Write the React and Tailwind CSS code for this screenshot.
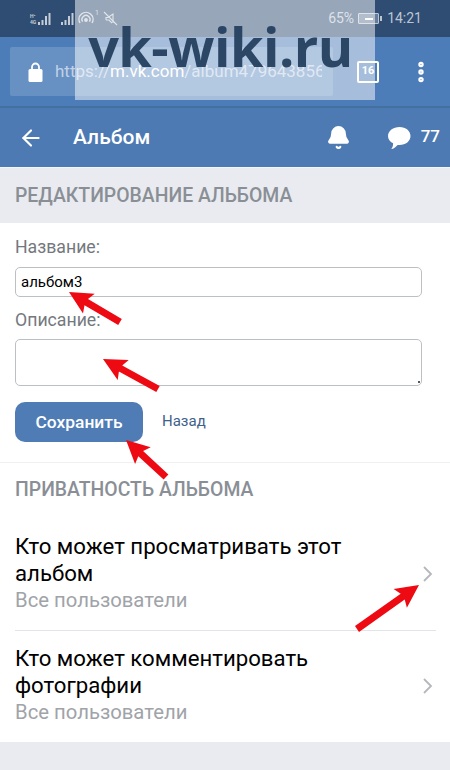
import React from 'react'
import { ArrowLeft, Bell, EllipsisVertical } from 'lucide-react'

const font = { fontFamily: 'Roboto, "Noto Sans", sans-serif' }

const arrows = [
  [120, 322, 69, 292],
  [158, 389, 103, 359],
  [166, 477, 126, 440],
  [357, 629, 419, 585],
]

function arrowPoints([x1, y1, x2, y2]) {
  const len = Math.hypot(x2 - x1, y2 - y1)
  const ux = (x2 - x1) / len
  const uy = (y2 - y1) / len
  const at = (along, side) => `${(x1 + ux * along - uy * side).toFixed(1)},${(y1 + uy * along + ux * side).toFixed(1)}`
  const neck = len - 20
  return [at(0, -3.5), at(neck, -3.5), at(neck - 3, -11.5), at(len, 0), at(neck - 3, 11.5), at(neck, 3.5), at(0, 3.5)].join(' ')
}

function Signal({ className }) {
  return (
    <svg width="14" height="14" viewBox="0 0 14 14" className={className} fill="currentColor">
      <rect x="0" y="10" width="2" height="3" />
      <rect x="3.5" y="8" width="2" height="5" />
      <rect x="7" y="4" width="2" height="9" />
      <rect x="10.5" y="1" width="2" height="12" />
    </svg>
  )
}

function StatusBar() {
  return (
    <div className="h-[37px] bg-[#2f4c72] flex items-center text-[#b4c0cf] shrink-0 pl-[30px] pr-[28px]">
      <div className="flex items-center text-[#c4ccd6]">
        <div className="w-[8px] text-[5px] leading-[6px] font-bold">
          <div>H⁺</div>
          <div>4G</div>
        </div>
        <Signal />
        <Signal className="ml-[9px]" />
        <svg width="16" height="16" viewBox="0 0 16 16" className="ml-[3px]" fill="none" stroke="currentColor" strokeWidth="1.4">
          <path d="M2 12a7 7 0 1 1 12 0" />
          <path d="M4.6 10.6a4 4 0 1 1 6.8 0" />
          <circle cx="8" cy="9" r="1.2" fill="currentColor" />
        </svg>
        <span className="text-[7px] ml-[1px] -mt-[10px]">1</span>
        <svg width="15" height="15" viewBox="0 0 15 15" className="ml-[4px]" fill="none" stroke="currentColor" strokeWidth="1.1">
          <path d="M1 1l13 13" />
          <path d="M3 9V6.5h2L10 3v9" />
          <path d="M3 9h3l3 3" />
        </svg>
      </div>
      <div className="ml-auto flex items-center text-[14px] text-[#bcc6d2]">
        <span>65%</span>
        <div className="ml-[4px] w-[21px] h-[11px] border border-[#bcc6d2] bg-[#bcc6d2]/40 rounded-[1px] flex items-center justify-center">
          <div className="w-[8px] h-[2px] bg-white" />
        </div>
        <div className="w-[2px] h-[5px] bg-[#bcc6d2] ml-[1px]" />
        <span className="ml-[5px]">14:21</span>
      </div>
    </div>
  )
}

function BrowserBar() {
  return (
    <div className="h-[71px] bg-[#4d7db9] border-b-2 border-[#44709f] flex items-center pl-[10px] shrink-0">
      <div className="w-[323px] h-[49px] bg-white/15 rounded-[2px] flex items-center pl-[18px] overflow-hidden">
        <svg width="15" height="20" viewBox="0 0 15 20" className="shrink-0" fill="none">
          <path d="M4 8V5a3.5 3.5 0 0 1 7 0v3" stroke="white" strokeWidth="1.8" />
          <rect x="0.5" y="7" width="14" height="13" rx="1.5" fill="white" />
        </svg>
        <div className="ml-[12px] w-[267px] overflow-hidden whitespace-nowrap text-[17px] text-white/60">
          https://<span className="text-white">m.vk.com</span>/album479643856
        </div>
      </div>
      <div className="ml-[24px] w-[22px] h-[22px] border-2 border-white rounded-[2px] flex items-center justify-center text-white text-[11px] font-bold">
        16
      </div>
      <EllipsisVertical size={26} strokeWidth={3} className="ml-[29px] text-white" />
    </div>
  )
}

function Header() {
  return (
    <div className="h-[59px] bg-[#4d7ab3] flex items-center text-white shrink-0 pl-[18px] pr-[10px]">
      <ArrowLeft size={26} strokeWidth={2} />
      <span className="ml-[29px] text-[21px] font-medium">Альбом</span>
      <Bell size={25} className="ml-auto fill-white" />
      <svg width="24" height="24" viewBox="0 0 24 24" fill="white" className="ml-[36px]">
        <path d="M12.5 1C18.8 1 23.5 4.9 23.5 10s-4.7 9-11 9c-.8 0-1.2 0-1.9-.1C9 20.8 7 22.4 5 23c-.4.1-.7-.3-.4-.6 1-1.2 1.5-2.7 1.5-5.1C2.900 15.700 1 13.100 1 10 1 4.900 6.200 1 12.500 1z" />
      </svg>
      <span className="ml-[10px] text-[17px] font-medium -mt-[2px]">77</span>
    </div>
  )
}

function SectionTitle({ children }) {
  return <div className="text-[19.4px] leading-[28px] font-medium text-[#8a8f96]">{children}</div>
}

function PrivacyRow({ title, divided }) {
  return (
    <div className={`ml-[15px] mr-[14px] flex items-center pt-[14px] pb-[16px] ${divided ? 'border-b border-[#e3e4e8]' : ''}`}>
      <div className="flex-1">
        <div className="text-[22.2px] leading-[27px] text-black w-[360px]">{title}</div>
        <div className="text-[20.3px] leading-[27px] text-[#a0a3a8]">Все пользователи</div>
      </div>
      <svg width="12" height="18" viewBox="0 0 12 18" fill="none" stroke="#b4b7bc" strokeWidth="1.8" className="mr-[2px] shrink-0">
        <path d="M2 2l7 7-7 7" />
      </svg>
    </div>
  )
}

export default function App() {
  return (
    <div className="relative w-[450px] h-[770px] overflow-hidden bg-white flex flex-col" style={font}>
      <StatusBar />
      <BrowserBar />
      <Header />

      <div className="h-[56px] bg-[#e9ebf0] border-t border-[#f2f5f9] flex items-center pl-[15px] shrink-0">
        <SectionTitle>РЕДАКТИРОВАНИЕ АЛЬБОМА</SectionTitle>
      </div>

      <div className="px-[15px] pt-[12px] shrink-0">
        <div className="text-[17.7px] leading-[24px] text-[#74787e]">Название:</div>
        <div className="mt-[8px] w-[407px] h-[30px] border border-[#bcbfc4] rounded-[5px] flex items-center pl-[5px] text-[15px] text-black">
          альбом3
        </div>
        <div className="mt-[11px] text-[17.7px] leading-[24px] text-[#74787e]">Описание:</div>
        <div className="mt-[7px] w-[407px] h-[47px] border border-[#bcbfc4] rounded-[5px] flex justify-end items-end pr-[1px] pb-[2px]">
          <div className="w-[2px] h-[2px] bg-[#55595f]" />
        </div>
        <div className="mt-[16px] flex items-center">
          <div className="w-[128px] h-[40px] rounded-[10px] bg-[#4f7cb5] text-white text-[17.4px] font-medium flex items-center justify-center">
            Сохранить
          </div>
          <span className="ml-[19px] -mt-[2px] text-[15px] text-[#3f618c]">Назад</span>
        </div>
      </div>

      <div className="mt-[20px] border-t border-[#eff0f2] pt-[13px] pl-[15px] shrink-0">
        <SectionTitle>ПРИВАТНОСТЬ АЛЬБОМА</SectionTitle>
      </div>

      <div className="mt-[15px] shrink-0">
        <PrivacyRow title="Кто может просматривать этот альбом" divided />
        <PrivacyRow title="Кто может комментировать фотографии" />
      </div>

      <div className="flex-1 bg-[#e9ebf0]" />

      {/* arrows drawn over the screenshot */}
      <svg className="absolute inset-0 pointer-events-none" width="450" height="770" viewBox="0 0 450 770">
        {arrows.map((a) => (
          <polygon key={a.join('-')} points={arrowPoints(a)} fill="#ee0a12" />
        ))}
      </svg>

      {/* site watermark */}
      <div className="absolute left-[75px] top-0 w-[300px] h-[100px] bg-white/50 flex justify-center">
        <span className="text-[54px] leading-none font-bold text-[#25405f]/95 mt-[19px] -ml-[9px] tracking-[-0.5px]" style={{ fontFamily: '"Open Sans", sans-serif' }}>
          vk-wiki.ru
        </span>
      </div>
    </div>
  )
}
